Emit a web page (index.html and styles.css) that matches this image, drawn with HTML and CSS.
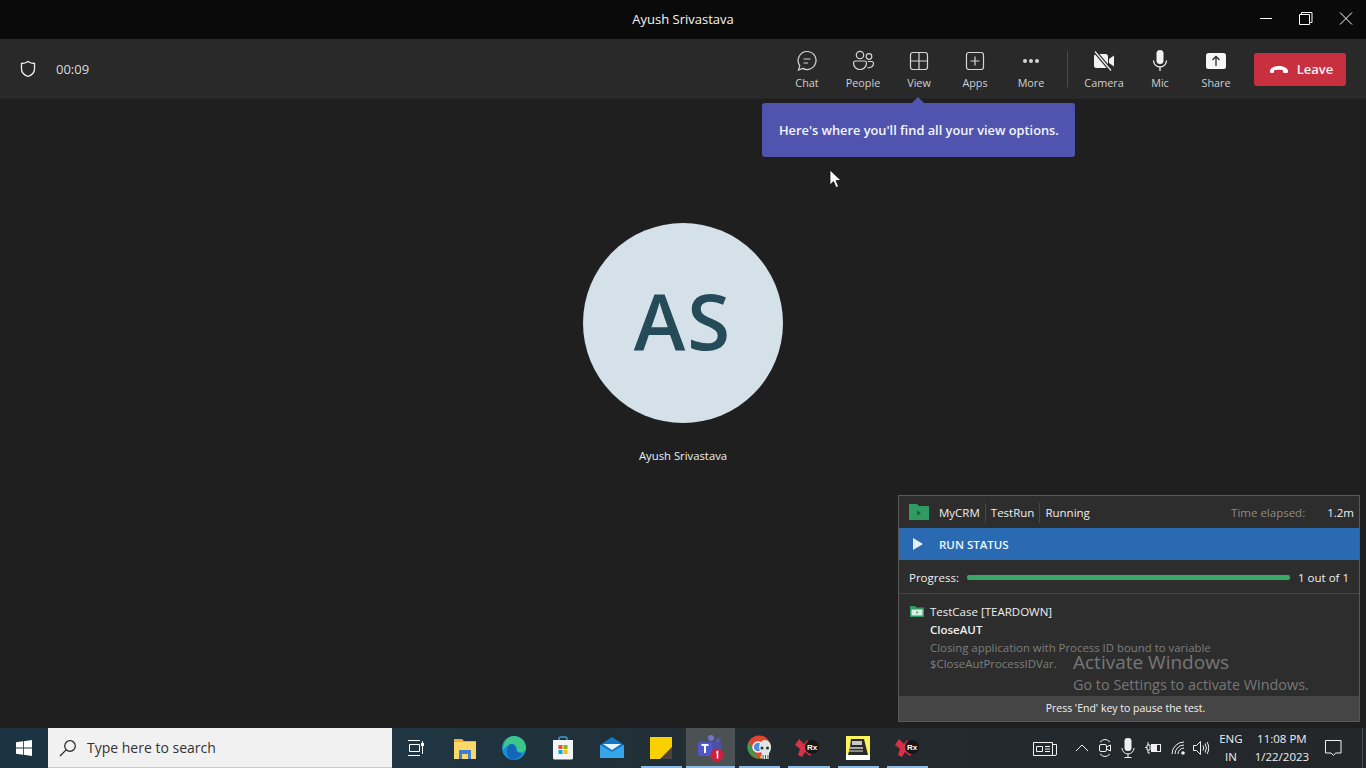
FILE: index.html
```html
<!DOCTYPE html>
<html lang="en">
<head>
<meta charset="utf-8">
<title>Ayush Srivastava</title>
<link rel="stylesheet" href="styles.css">
</head>
<body>
<div class="screen">
  <header class="titlebar">
    <span class="title">Ayush Srivastava</span>
    <div class="winctl">
      <svg width="40" height="16" viewBox="0 0 40 16"><path d="M14 7.500h12" stroke="#fff" fill="none"/></svg>
      <svg width="40" height="16" viewBox="0 0 40 16"><path d="M13.500 3.500h10v10h-10zM15.500 3.500V1.500h10.500v10h-2.500" stroke="#fff" fill="none"/></svg>
      <svg width="40" height="16" viewBox="0 0 40 16"><path d="M14 1.500l12 12M26 1.500l-12 12" stroke="#fff" fill="none"/></svg>
    </div>
  </header>

  <nav class="toolbar">
    <svg class="shield" width="16" height="18" viewBox="0 0 16 18"><path d="M8 1.500c2 1.500 4 2 6.500 2v5.500c0 3.500-2.500 6-6.500 7.500-4-1.500-6.500-4-6.500-7.500V3.500c2.500 0 4.500-.5 6.500-2z" fill="none" stroke="#f0f0f0" stroke-width="1.300"/></svg>
    <span class="timer">00:09</span>
    <div class="tools">
      <button class="tool">
        <svg width="24" height="24" viewBox="0 0 24 24" fill="none" stroke="#d6d6d6" stroke-width="1.200"><path d="M12 2.500a9 9 0 1 1-4.300 16.900L3.500 21l1.300-4.300A9 9 0 0 1 12 2.500z"/><path d="M8.500 10h7M8.500 14h4.500"/></svg>
        <span>Chat</span>
      </button>
      <button class="tool">
        <svg width="24" height="24" viewBox="0 0 24 24" fill="none" stroke="#d6d6d6" stroke-width="1.200"><circle cx="9" cy="6" r="3.700"/><circle cx="18" cy="7.500" r="2.800"/><path d="M2.500 14a2 2 0 0 1 2-2h9a2 2 0 0 1 2 2c0 4-3 6.500-6.500 6.500S2.500 18 2.500 14z"/><path d="M17 12.500h4a2 2 0 0 1 1.500 2c0 2.800-2.500 4.500-6 4.200"/></svg>
        <span>People</span>
      </button>
      <button class="tool">
        <svg width="24" height="24" viewBox="0 0 24 24" fill="none" stroke="#d6d6d6" stroke-width="1.200"><rect x="3.500" y="3.500" width="17" height="17" rx="2.500"/><path d="M12 3.500v17M3.500 12h17"/></svg>
        <span>View</span>
      </button>
      <button class="tool">
        <svg width="24" height="24" viewBox="0 0 24 24" fill="none" stroke="#d6d6d6" stroke-width="1.200"><rect x="3.500" y="3.500" width="17" height="17" rx="2.500"/><path d="M12 7.500v9M7.500 12h9"/></svg>
        <span>Apps</span>
      </button>
      <button class="tool">
        <svg width="24" height="24" viewBox="0 0 24 24" fill="#d6d6d6"><circle cx="6" cy="12" r="2"/><circle cx="12" cy="12" r="2"/><circle cx="18" cy="12" r="2"/></svg>
        <span>More</span>
      </button>
      <i class="divider"></i>
      <button class="tool">
        <svg width="24" height="24" viewBox="0 0 24 24"><rect x="2" y="5" width="14" height="14" rx="2.500" fill="#f2f2f2"/><path d="M17 10l5-3.500v11L17 14z" fill="#f2f2f2"/><path d="M3 2.500l16 19" stroke="#292929" stroke-width="3.500"/><path d="M3 2.500l16 19" stroke="#f2f2f2" stroke-width="1.200"/></svg>
        <span>Camera</span>
      </button>
      <button class="tool">
        <svg width="24" height="24" viewBox="0 0 24 24" fill="none"><rect x="8.500" y="1" width="7" height="14" rx="3.500" fill="#f2f2f2"/><path d="M5.500 11.500a6.500 6.500 0 0 0 13 0M12 18v4" stroke="#f2f2f2" stroke-width="1.300"/></svg>
        <span>Mic</span>
      </button>
      <button class="tool">
        <svg width="24" height="24" viewBox="0 0 24 24"><rect x="2" y="4" width="20" height="16" rx="2.500" fill="#f7f7f7"/><path d="M12 17V8M8.500 11L12 7.500l3.500 3.500" fill="none" stroke="#292929" stroke-width="1.300"/></svg>
        <span>Share</span>
      </button>
      <button class="leave">
        <svg width="20" height="10" viewBox="0 0 20 10"><path d="M1 8c-.6-3 3-6 9-6s9.600 3 9 6c-.2.800-.8 1-1.600 1h-2c-.8 0-1.300-.4-1.400-1.200l-.2-1.500C12.500 5.500 7.500 5.500 5.200 6.300L5 7.800C4.900 8.600 4.400 9 3.600 9h-1C1.800 9 1.200 8.800 1 8z" fill="#fff"/></svg>
        <span>Leave</span>
      </button>
    </div>
  </nav>

  <main class="stage">
    <div class="avatar">AS</div>
    <div class="person">Ayush Srivastava</div>
  </main>

  <footer class="taskbar">
    <div class="start">
      <svg width="16" height="16" viewBox="0 0 16 16" fill="#fff"><path d="M0 2.300l7-1v6.300H0zM7.800 1.200L16 0v7.600H7.800zM0 8.400h7v6.300l-7-1zM7.800 8.400H16V16l-8.200-1.200z"/></svg>
    </div>
    <div class="search">
      <svg width="18" height="18" viewBox="0 0 18 18" fill="none" stroke="#222" stroke-width="1.200"><circle cx="11" cy="7" r="5.300"/><path d="M7.200 10.800L1 17"/></svg>
      <span>Type here to search</span>
    </div>
    <div class="apps">
      <div class="app">
        <svg width="16" height="18" viewBox="0 0 16 18" fill="none" stroke="#fff"><path d="M1.500 5.500h10v7h-10zM0 1.500h12M0 16.500h12M14.500 2v3M14.500 7v8"/><rect x="13" y="4" width="3" height="3" fill="#fff" stroke="none"/></svg>
      </div>
      <div class="app">
        <svg width="22" height="22" viewBox="0 0 22 22"><path d="M0 2h8l2 2h12v18H0z" fill="#e9b03a"/><rect y="5" width="22" height="17" fill="#fdd868"/><path d="M5 22v-9h12v9h-3v-5H8v5z" fill="#3f7fd6"/></svg>
      </div>
      <div class="app">
        <svg width="24" height="24" viewBox="0 0 24 24"><circle cx="12" cy="12" r="12" fill="#1a8fd0"/><path d="M12 0a12 12 0 0 1 12 12c0 3-3 5-6 4.500-2-.4-3-1.500-3-3 0-4-3.500-6-7-5-2 .6-5 3-7 5C1.500 5 6 0 12 0z" fill="#3cc68a"/><path d="M9 8c3 0 5 2 5 5s3 4.500 6 4a12 12 0 0 1-9 6.800C6 23 4 17 5 13c.6-2.500 2-5 4-5z" fill="#1366b8"/></svg>
      </div>
      <div class="app">
        <svg width="24" height="24" viewBox="0 0 24 24"><path d="M8 5V3a2 2 0 0 1 2-2h4a2 2 0 0 1 2 2v2" fill="none" stroke="#3aa0dc" stroke-width="1.500"/><path d="M2 4h20v18a1.500 1.500 0 0 1-1.500 1.500h-17A1.500 1.500 0 0 1 2 22z" fill="#f2f4f6"/><rect x="7.500" y="9" width="4" height="4" fill="#f25022"/><rect x="12.500" y="9" width="4" height="4" fill="#7fba00"/><rect x="7.500" y="14" width="4" height="4" fill="#00a4ef"/><rect x="12.500" y="14" width="4" height="4" fill="#ffb900"/></svg>
      </div>
      <div class="app">
        <svg width="24" height="24" viewBox="0 0 24 24"><path d="M0 9l12-8 12 8v13H0z" fill="#0f78c8"/><path d="M0 9l12 7 12-7v13H0z" fill="#37a5ea"/><path d="M3 8h18l-9 6z" fill="#e8f4fb"/></svg>
      </div>
      <div class="app underlined">
        <svg width="24" height="24" viewBox="0 0 24 24"><rect x="1" y="1" width="22" height="22" fill="#fbd000"/><path d="M23 11v12H11z" fill="#4a4340"/></svg>
      </div>
      <div class="app active underlined">
        <svg width="30" height="30" viewBox="0 0 30 30"><circle cx="15" cy="5" r="3" fill="#6f73c9"/><circle cx="22" cy="8" r="2.800" fill="#5358a8"/><rect x="10" y="9" width="16" height="13" rx="5" fill="#4b50a8"/><rect x="2" y="9" width="14" height="14" rx="2" fill="#5057c8"/><path d="M5.500 12h7M9 12v8" stroke="#fff" stroke-width="2"/><circle cx="21" cy="22" r="6.500" fill="#cf1f3d"/><path d="M20.200 19.500l1.300-1v7" fill="none" stroke="#fff" stroke-width="1.500"/></svg>
      </div>
      <div class="app underlined">
        <svg width="26" height="26" viewBox="0 0 26 26"><circle cx="12" cy="12" r="11.500" fill="#e0452f"/><path d="M1.600 7L7 17l5.500 6.500A11.500 11.500 0 0 1 1.600 7z" fill="#3c9a47"/><path d="M12 7h10.500a11.500 11.500 0 0 1-10 16.500L17 15z" fill="#f7c62f"/><circle cx="11" cy="12" r="5" fill="#4a8ee8" stroke="#fff" stroke-width="1.500"/><path d="M12 12a6 7 0 0 1 12 0c0 3-1 5-2 6v6h-7v-5c-1-1-3-4-3-7z" fill="#dfe7e6"/><circle cx="15" cy="13" r="1.500" fill="#333"/><circle cx="20.500" cy="13" r="1.500" fill="#333"/><path d="M16 20v4M18.500 20v4M21 20v4" stroke="#555"/></svg>
      </div>
      <div class="app underlined">
        <svg class="rx-icon" width="26" height="24" viewBox="0 0 26 24"><path d="M5 3l5 5 3-4 3 3-3 5 5 5-2 3-5-4-3 5-4-2 2-6-5-4z" fill="#d9304a"/><circle cx="18" cy="11" r="7" fill="#161616"/><text x="13" y="14" class="rx">Rx</text></svg>
      </div>
      <div class="app underlined">
        <svg width="24" height="24" viewBox="0 0 24 24"><rect width="24" height="24" fill="#fdf45e"/><rect y="18" width="24" height="6" fill="#fff"/><path d="M5 3h13l4 16H2l2-8z" fill="#2a2a2a"/><rect x="6" y="5" width="10" height="4" fill="#c8c8c8"/><rect x="4" y="11" width="13" height="2" fill="#aaa"/><rect x="3" y="14" width="14" height="2" fill="#888"/></svg>
      </div>
      <div class="app underlined">
        <svg width="26" height="24" viewBox="0 0 26 24"><path d="M5 3l5 5 3-4 3 3-3 5 5 5-2 3-5-4-3 5-4-2 2-6-5-4z" fill="#d9304a"/><circle cx="18" cy="11" r="7" fill="#161616"/><text x="13" y="14" class="rx">Rx</text></svg>
      </div>
    </div>
    <div class="tray">
      <svg class="t-news" width="24" height="16" viewBox="0 0 24 16" fill="none" stroke="#f0f0f0"><path d="M.500 2.500h19v13h-19zM19.500 4.500h4v9.500a1.500 1.500 0 0 1-1.500 1.500h-2.500"/><path d="M3.500 6.500h6v5h-6zM12 6.500h5M12 9h5M12 11.500h5"/></svg>
      <svg class="t-up" width="14" height="8" viewBox="0 0 14 8" fill="none" stroke="#f0f0f0"><path d="M1 7l6-6 6 6"/></svg>
      <svg class="t-cam" width="14" height="20" viewBox="0 0 14 20" fill="none" stroke="#f0f0f0"><path d="M2 4q5-5 10 0M2 16q5 5 10 0"/><rect x="1.500" y="6.500" width="7" height="7" rx="1.500"/><path d="M8.500 9l4-2v6l-4-2"/></svg>
      <svg class="t-mic" width="14" height="20" viewBox="0 0 14 20"><rect x="3.500" y="0" width="7" height="13" rx="3" fill="#f0f0f0"/><path d="M1 10a6 6 0 0 0 12 0M7 16v3M3.500 19.500h7" fill="none" stroke="#f0f0f0"/></svg>
      <svg class="t-bat" width="16" height="14" viewBox="0 0 16 14" fill="none" stroke="#f0f0f0"><path d="M0 6.500h2M2 4h3v5H2zM3 1v3M3 9v3h2"/><rect x="6.500" y="3.500" width="9" height="7"/><rect x="7" y="4" width="5" height="6" fill="#f0f0f0" stroke="none"/></svg>
      <svg class="t-wifi" width="14" height="14" viewBox="0 0 14 14" fill="none" stroke="#f0f0f0"><path d="M1 13A12 12 0 0 1 13 1M4 13a9 9 0 0 1 9-9M7 13a6 6 0 0 1 6-6"/><circle cx="12" cy="12" r="1.800" fill="#f0f0f0" stroke="none"/></svg>
      <svg class="t-vol" width="16" height="14" viewBox="0 0 16 14" fill="none" stroke="#f0f0f0"><path d="M.500 4.500h3l4-4v13l-4-4h-3zM10 4.500q1.500 2.500 0 5M12 2.500q3 4.500 0 9M14 1q3.500 6 0 12"/></svg>
      <div class="lang"><span>ENG</span><span>IN</span></div>
      <div class="clock"><span>11:08 PM</span><span>1/22/2023</span></div>
      <svg class="t-note" width="18" height="17" viewBox="0 0 18 17" fill="none" stroke="#f0f0f0"><path d="M.500.500h15.500v12.500h-5.500L8.500 15.500 6 13H.500z"/></svg>
      <i class="showdesk"></i>
    </div>
  </footer>

  <div class="tip">Here's where you'll find all your view options.</div>

  <svg class="cursor" width="13" height="20" viewBox="0 0 13 20"><path d="M1 1v15l3.500-3.500 2.500 6 2.500-1-2.500-6h5z" fill="#fff" stroke="#111" stroke-width=".8"/></svg>

  <aside class="runner">
    <div class="r-head">
      <svg width="20" height="16" viewBox="0 0 20 16"><path d="M0 0h8l2 2h10v14H0z" fill="#2f9b62"/><path d="M8 6.500l4 2.500-4 2.500z" fill="#1c5f3c"/></svg>
      <span class="r-crumb first">MyCRM</span>
      <span class="r-crumb">TestRun</span>
      <span class="r-crumb">Running</span>
      <span class="r-muted">Time elapsed:</span>
      <span class="r-time">1.2m</span>
    </div>
    <div class="r-status">
      <svg width="12" height="12" viewBox="0 0 12 12"><path d="M1 0l10 6-10 6z" fill="#e6f0fa"/></svg>
      <span>RUN STATUS</span>
    </div>
    <div class="r-progress">
      <span>Progress:</span>
      <i class="bar"></i>
      <span>1 out of 1</span>
    </div>
    <div class="r-case">
      <svg width="14" height="11" viewBox="0 0 14 11"><path d="M0 0h5l1.500 1.500H14V11H0z" fill="#2f9b62"/><rect x="1.500" y="3.500" width="11" height="6" fill="#d9efe3"/><path d="M6.500 5l2 1.500-2 1.500z" fill="#2f9b62"/></svg>
      <div class="r-lines">
        <div>TestCase [TEARDOWN]</div>
        <div class="r-name">CloseAUT</div>
        <div class="r-desc">Closing application with Process ID bound to variable<br>$CloseAutProcessIDVar.</div>
      </div>
    </div>
    <div class="r-foot">Press 'End' key to pause the test.</div>
  </aside>

  <div class="watermark">
    <div class="wm-big">Activate Windows</div>
    <div class="wm-small">Go to Settings to activate Windows.</div>
  </div>
</div>
</body>
</html>
```

FILE: styles.css
```css
* { box-sizing: border-box; }
html, body { margin: 0; padding: 0; background: #1f1f1f; }
body { font-family: "Open Sans", "Noto Sans", sans-serif; color: #fff; overflow: hidden; }
.screen { position: relative; width: 1366px; height: 768px; display: flex; flex-direction: column; overflow: hidden; }

.titlebar { height: 39px; flex: none; background: #0a0a0a; display: flex; align-items: center; justify-content: center; position: relative; }
.title { font-size: 13px; font-weight: 500; color: #f5f5f5; margin-top: -1px; }
.winctl { position: absolute; right: 0; top: 11px; display: flex; }
.winctl svg { display: block; }

.toolbar { height: 60px; flex: none; background: #292929; display: flex; align-items: center; padding-left: 20px; box-shadow: inset 0 -1px 0 #262626; }
.shield { flex: none; }
.timer { font-size: 13px; color: #dcdcdc; margin-left: 20px; }
.tools { margin-left: auto; display: flex; align-items: center; padding-right: 20px; }
.tool { width: 56px; height: 60px; padding: 10px 0 0; background: none; border: 0; display: flex; flex-direction: column; align-items: center; font-family: inherit; color: #d0d0d0; }
.tool svg { display: block; height: 24px; flex: none; }
.tool span { font-size: 10.800px; line-height: 15px; margin-top: 2px; white-space: nowrap; }
.divider { width: 1px; height: 36px; background: #4a4a4a; margin: 0 8px; }
.leave { width: 92px; height: 33px; margin-left: 10px; padding-left: 8px; background: #c8303f; border: 0; border-radius: 3px; display: flex; align-items: center; justify-content: center; gap: 8px; color: #f3f3f3; font-family: inherit; font-size: 13px; font-weight: 600; }
.leave svg { flex: none; }

.stage { flex: 1; min-height: 0; background: #1f1f1f; display: flex; flex-direction: column; align-items: center; padding-top: 124px; }
.avatar { width: 200px; height: 200px; padding-bottom: 6px; border-radius: 50%; background: #d4e1e8; color: #254b58; display: flex; align-items: center; justify-content: center; font-size: 78px; font-weight: 600; letter-spacing: 2px; }
.person { margin-top: 24px; font-size: 11.300px; line-height: 18px; color: #f0f0f0; }

.taskbar { height: 40px; flex: none; display: flex; background: linear-gradient(90deg, #1c3441 0%, #1f3642 30%, #242a2e 60%, #23272a 100%); }
.start { width: 48px; display: flex; align-items: center; justify-content: center; }
.search { width: 344px; background: #f1f1f1; display: flex; align-items: center; padding-left: 11px; gap: 10px; color: #333; font-size: 14px; border-bottom: 1px solid #c8c8c8; }
.apps { display: flex; }
.app { width: 49.200px; height: 40px; display: flex; align-items: center; justify-content: center; position: relative; }
.app:first-child { width: 48px; }
.active { background: #4c5154; }
.underlined::after { content: ""; position: absolute; left: 4px; right: 4px; bottom: 0; height: 2px; background: #8dbbe6; }
.active.underlined::after { left: 0; right: 0; }
.rx { font-family: "Liberation Sans", sans-serif; font-size: 8px; font-weight: 700; fill: #fff; }
.rx-icon { margin-left: -3px; }

.tray { flex: 1; display: flex; align-items: center; position: relative; color: #f0f0f0; }
.t-news { margin-left: 101px; }
.t-up { margin-left: 18px; }
.t-cam { margin-left: 9px; }
.t-mic { margin-left: 9px; }
.t-bat { margin-left: 10px; }
.t-wifi { margin-left: 10px; }
.t-vol { margin-left: 8px; }
.lang, .clock { display: flex; flex-direction: column; align-items: center; font-size: 11.500px; line-height: 18px; }
.lang { margin-left: 5px; width: 34px; }
.clock { margin-left: 2px; width: 64px; }
.t-note { margin-left: 11px; }
.showdesk { position: absolute; right: 3px; top: 0; width: 1px; height: 40px; background: #4a5055; }

.tip { position: absolute; left: 762px; top: 103px; width: 313px; height: 54px; background: #5054ae; border-radius: 3px; font-size: 12.800px; font-weight: 600; line-height: 54px; padding-left: 17px; color: #f4f4fb; white-space: nowrap; }
.tip::before { content: ""; position: absolute; left: 151px; top: -4px; width: 10px; height: 10px; background: #5054ae; transform: rotate(45deg); }

.cursor { position: absolute; left: 829px; top: 169px; }

.runner { position: absolute; left: 898px; top: 495px; width: 462px; height: 227px; background: #2d2d2d; border: 1px solid #585858; display: flex; flex-direction: column; font-size: 11.500px; color: #efefef; }
.r-head { height: 32px; flex: none; display: flex; align-items: center; padding: 1px 5px 0 10px; }
.r-head svg { margin-top: -1px; }
.r-crumb { padding: 0 5px; border-left: 1px solid #484848; line-height: 20px; }
.r-crumb.first { border-left: 0; margin-left: 5px; }
.r-muted { margin-left: auto; color: #8b8b8b; }
.r-time { margin-left: 22px; }
.r-status { height: 32px; flex: none; background: #2a6ab3; display: flex; align-items: center; padding-left: 13px; gap: 15px; font-weight: 600; color: #f0f6fc; }
.r-progress { height: 34px; flex: none; display: flex; align-items: center; padding: 2px 10px 0 10px; gap: 8px; border-bottom: 1px solid #464646; white-space: nowrap; }
.bar { flex: 1; height: 5px; background: #3aa866; border-radius: 2px; }
.r-case { flex: 1; display: flex; padding: 9px 10px 0 11px; gap: 6px; align-items: flex-start; min-height: 0; }
.r-case svg { margin-top: 3px; flex: none; }
.r-lines { line-height: 18px; }
.r-name { font-weight: 600; }
.r-desc { color: #7e7e7e; line-height: 16px; font-size: 11.400px; margin-top: 1px; }
.r-foot { height: 25px; flex: none; background: #454545; text-align: center; line-height: 25px; font-size: 10.500px; padding-right: 7px; color: #f2f2f2; }

.watermark { position: absolute; left: 1073px; top: 649px; color: rgba(255, 255, 255, 0.36); pointer-events: none; white-space: nowrap; }
.wm-big { font-size: 19px; line-height: 26px; }
.wm-small { font-size: 14.400px; line-height: 20px; }
```
